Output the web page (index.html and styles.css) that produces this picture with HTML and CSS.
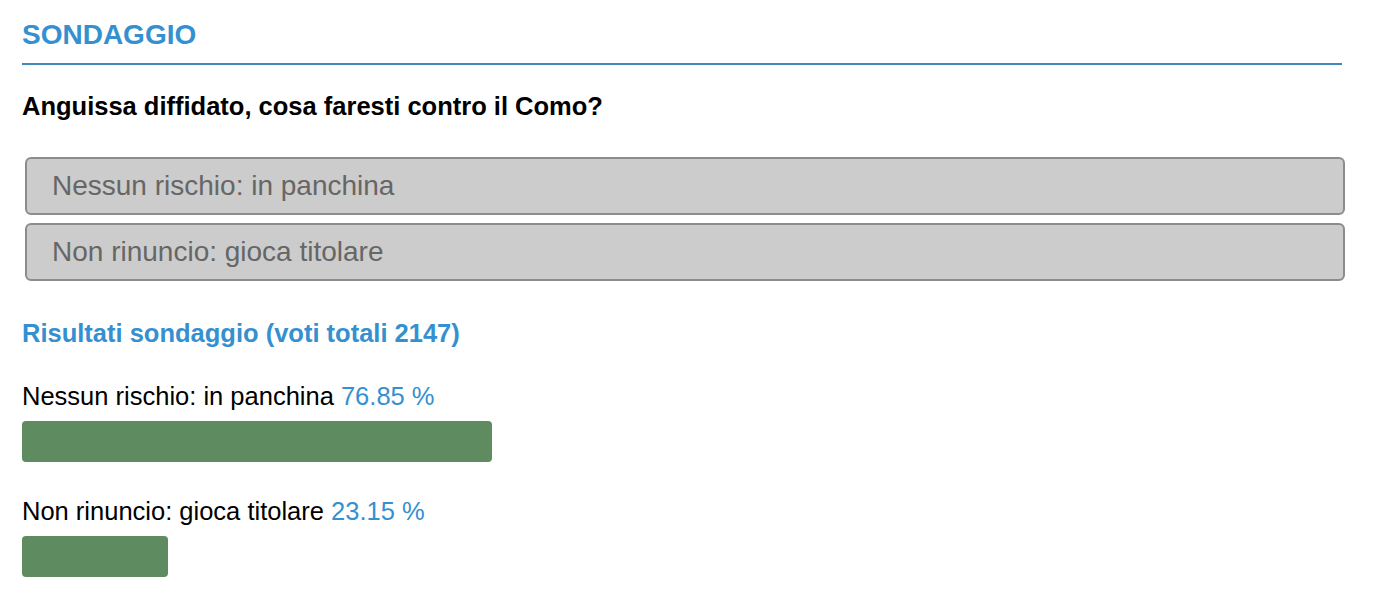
FILE: index.html
```html
<!DOCTYPE html>
<html lang="it">
  <head>
    <meta charset="UTF-8" />
    <meta name="viewport" content="width=device-width, initial-scale=1.0" />
    <title>Sondaggio</title>
    <link rel="stylesheet" href="styles.css">
  </head>
  <body>
    <div class="poll">
      <h2 class="poll-title">SONDAGGIO</h2>
      <p class="poll-question">Anguissa diffidato, cosa faresti contro il Como?</p>

      <div class="poll-options">
        <button class="poll-option">Nessun rischio: in panchina</button>
        <button class="poll-option">Non rinuncio: gioca titolare</button>
      </div>

      <h3 class="poll-results-title">Risultati sondaggio (voti totali 2147)</h3>

      <div class="result">
        <p class="result-label">Nessun rischio: in panchina <span class="result-perc">76.85 %</span></p>
        <div class="result-bar" style="width: 470px"></div>
      </div>
      <div class="result">
        <p class="result-label">Non rinuncio: gioca titolare <span class="result-perc">23.15 %</span></p>
        <div class="result-bar" style="width: 146px"></div>
      </div>
    </div>
  </body>
</html>
```

FILE: styles.css
```css
body {
  margin: 0;
  background: #fff;
  font-family: "Liberation Sans", Arial, Helvetica, sans-serif;
  color: #000;
}
.poll {
  width: 1320px;
  padding: 19px 22px 0 22px;
}
.poll-title {
  margin: 0;
  font-size: 28px;
  line-height: 32px;
  font-weight: bold;
  color: #3590cf;
  padding-bottom: 12px;
  border-bottom: 2px solid #3f8abb;
}
.poll-question {
  margin: 26px 0 0 0;
  font-size: 25.5px;
  line-height: 30px;
  font-weight: bold;
}
.poll-options {
  margin-top: 36px;
  display: flex;
  flex-direction: column;
  gap: 8px;
}
.poll-option {
  display: block;
  box-sizing: border-box;
  margin: 0 0 0 3px;
  width: 1320px;
  height: 58px;
  padding: 0 25px;
  text-align: left;
  font-family: inherit;
  font-size: 28px;
  color: #666;
  background: #ccc;
  border: 2px solid #8c8c8c;
  border-radius: 6px;
  cursor: pointer;
}
.poll-results-title {
  margin: 37px 0 0 0;
  font-size: 25.5px;
  line-height: 30px;
  font-weight: bold;
  color: #3590cf;
}
.result {
  margin-top: 33px;
}
.result + .result {
  margin-top: 34px;
}
.result-label {
  margin: 0;
  font-size: 25.5px;
  line-height: 30px;
}
.result-perc {
  color: #3590cf;
}
.result-bar {
  margin-top: 10px;
  height: 41px;
  background: #5e8b5f;
  border-radius: 4px;
}
```
